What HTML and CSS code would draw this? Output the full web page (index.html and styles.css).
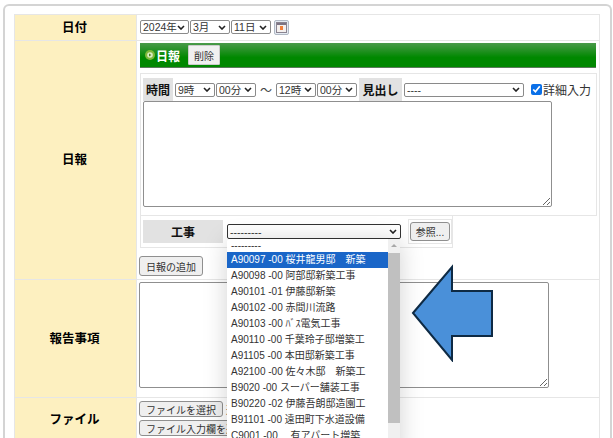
FILE: index.html
```html
<!DOCTYPE html>
<html lang="ja">
<head>
  <meta charset="UTF-8" />
  <meta name="viewport" content="width=device-width, initial-scale=1.0" />
  <title>日報入力</title>
  <link rel="stylesheet" href="styles.css">
</head>
<body>
  <div class="page">
    <div class="card">
      <table class="form">
        <tr class="row-date">
          <th>日付</th>
          <td>
            <div class="date-line">
              <select class="sel w-year"><option>2024年</option></select>
              <select class="sel w-mon"><option>3月</option></select>
              <select class="sel w-day"><option>11日</option></select>
              <button class="cal" type="button">
                <svg width="11" height="11" viewBox="0 0 11 11">
                  <rect x="0.5" y="0.5" width="10" height="10" fill="#f4f0ee" stroke="#8a8490"/>
                  <rect x="1" y="1" width="9" height="2" fill="#7c7484"/>
                  <rect x="4" y="4" width="3" height="4" fill="#f0803a"/>
                </svg>
              </button>
            </div>
          </td>
        </tr>
        <tr class="row-report">
          <th>日報</th>
          <td>
            <div class="green-bar">
              <svg class="bullet" width="10" height="10" viewBox="0 0 10 10">
                <circle cx="5" cy="5" r="5" fill="#7fb83a"/>
                <circle cx="5" cy="5" r="2.8" fill="#dcecc4"/>
                <path d="M4 3.4 6.4 5 4 6.6z" fill="#4a8a1a"/>
              </svg>
              <span class="green-title">日報</span>
              <button class="btn btn-del" type="button">削除</button>
            </div>
            <div class="entry">
              <div class="time-line">
                <span class="cap cap-time">時間</span>
                <select class="sel w-hour"><option>9時</option></select>
                <select class="sel w-min"><option>00分</option></select>
                <span class="tilde">～</span>
                <select class="sel w-hour"><option>12時</option></select>
                <select class="sel w-min"><option>00分</option></select>
                <span class="cap cap-head">見出し</span>
                <select class="sel w-head"><option>----</option></select>
                <label class="detail"><input type="checkbox" checked />詳細入力</label>
              </div>
              <textarea class="note"></textarea>
            </div>
            <div class="koji">
              <span class="cap cap-koji">工事</span>
              <div class="koji-pick">
                <select class="sel sel-focus"><option>---------</option></select>
                <div class="drop">
                  <ul class="drop-list">
                    <li class="first">---------</li>
                    <li class="on">A90097 -00 桜井龍男邸　新築</li>
                    <li>A90098 -00 阿部邸新築工事</li>
                    <li>A90101 -01 伊藤邸新築</li>
                    <li>A90102 -00 赤間川流路</li>
                    <li>A90103 -00 ﾊﾞｽ電気工事</li>
                    <li>A90110 -00 千葉玲子邸増築工</li>
                    <li>A91105 -00 本田邸新築工事</li>
                    <li>A92100 -00 佐々木邸　新築工</li>
                    <li>B9020 -00 スーパー舗装工事</li>
                    <li>B90220 -02 伊藤吾朗邸造園工</li>
                    <li>B91101 -00 遠田町下水道設備</li>
                    <li>C9001 -00 　有アパート増築</li>
                  </ul>
                  <div class="drop-bar">
                    <span class="drop-up"></span>
                    <span class="drop-thumb"></span>
                  </div>
                </div>
              </div>
              <span class="ref-box"><button class="btn btn-ref" type="button">参照...</button></span>
            </div>
            <button class="btn btn-add" type="button">日報の追加</button>
          </td>
        </tr>
        <tr class="row-notes">
          <th>報告事項</th>
          <td><textarea class="note note-wide"></textarea></td>
        </tr>
        <tr class="row-file">
          <th>ファイル</th>
          <td>
            <div class="file-line">
              <button class="btn btn-file" type="button">ファイルを選択</button>
              <span class="file-none">選択されていません</span>
            </div>
            <button class="btn btn-file" type="button">ファイル入力欄を追加</button>
          </td>
        </tr>
      </table>
    </div>
    <svg class="arrow" width="84" height="98" viewBox="0 0 84 98">
      <path d="M2 49 41 3V27H81V72H41V96z" fill="#4a90d9" stroke="#0e2a44" stroke-width="2"/>
    </svg>
  </div>
</body>
</html>
```

FILE: styles.css
```css
* {
  box-sizing: border-box;
}
html, body {
  margin: 0;
  height: 100%;
  background: #fff;
}
body {
  font-family: "Liberation Sans", "Noto Sans CJK JP", sans-serif;
  font-size: 12px;
  color: #000;
}
.page {
  position: relative;
  height: 100vh;
  overflow: hidden;
  padding: 4px 1px 0 3px;
}
.card {
  border: 2px solid #d4d4d4;
  border-bottom: none;
  border-radius: 6px 6px 0 0;
  padding: 8px 10px 0 9px;
  height: 600px;
}

/* main form */
.form {
  width: 586px;
  table-layout: fixed;
  border-collapse: collapse;
  border: 1px solid #e6e6e6;
}
.form th {
  width: 122px;
  background: #fdf0c0;
  border: 1px solid #e6e6e6;
  font-size: 12.5px;
  font-weight: bold;
  text-align: center;
  padding: 0 2px 3px 0;
}
.form td {
  border: 1px solid #e6e6e6;
  padding: 0 3px 0 2px;
  vertical-align: top;
}
.row-date { height: 26px; }
.row-report { height: 239px; }
.row-notes { height: 118px; }
.row-file { height: 45px; }

/* controls */
.sel {
  appearance: none;
  height: 14px;
  padding: 0 0 0 2px;
  font-family: inherit;
  font-size: 10.5px;
  line-height: 12px;
  color: #333;
  background: #fff url("data:image/svg+xml,%3Csvg xmlns='http://www.w3.org/2000/svg' width='8' height='5'%3E%3Cpath d='M1 1l3 3 3-3' fill='none' stroke='%23222' stroke-width='1.6'/%3E%3C/svg%3E") no-repeat right 3px center;
  border: 1px solid #8a8a8a;
  border-radius: 2px;
}
.w-year { width: 49px; }
.w-mon, .w-day, .w-hour, .w-min { width: 40px; }
.w-head { width: 120px; }
.sel-focus {
  width: 174px;
  height: 15px;
  border: 1px solid #333;
}
.btn {
  font-family: inherit;
  font-size: 10px;
  color: #333;
  background: #efefef;
  border: 1px solid #8f8f8f;
  border-radius: 3px;
  padding: 0;
}
.date-line {
  display: flex;
  align-items: center;
  gap: 1px;
  height: 24px;
  padding-left: 1px;
}
.cal {
  width: 15px;
  height: 15px;
  margin-left: 2px;
  padding: 0;
  display: flex;
  align-items: center;
  justify-content: center;
  background: #e4eaf2;
  border: 1px solid #b0b8c4;
  border-radius: 2px;
}

/* green title bar */
.green-bar {
  display: flex;
  align-items: center;
  width: 456px;
  height: 25px;
  margin: 2px 0 0 1px;
  padding-left: 5px;
  background: linear-gradient(#4a9a4a, #008800 60%);
  border-bottom: 1px solid #5a7a5a;
}
.green-title {
  margin-left: 1px;
  color: #fff;
  font-size: 12px;
  font-weight: bold;
}
.btn-del {
  width: 32px;
  height: 20px;
  margin-left: 8px;
  background: #f0f0f0;
  border-color: #ccc;
  border-radius: 1px;
}

/* entry block */
.entry {
  width: 457px;
  height: 143px;
  margin: 5px 0 0 1px;
  padding: 4px 0 0 2px;
  border: 1px solid #e6e6e6;
}
.time-line {
  display: flex;
  align-items: center;
  height: 23px;
  gap: 1px;
}
.cap {
  display: flex;
  align-items: center;
  justify-content: center;
  background: #e2e2e2;
  color: #111;
  font-size: 12px;
  font-weight: bold;
}
.cap-time {
  width: 30px;
  height: 23px;
  margin-right: 1px;
}
.cap-head {
  width: 43px;
  height: 23px;
  margin: 0 1px;
}
.tilde {
  width: 18px;
  text-align: center;
  color: #444;
}
.detail {
  display: flex;
  align-items: center;
  margin-left: 6px;
  color: #333;
  white-space: nowrap;
}
.detail input {
  width: 11px;
  height: 11px;
  margin: 0 1px 0 0;
  accent-color: #0a70e8;
}
.note {
  display: block;
  width: 409px;
  height: 106px;
  padding: 2px;
  border: 1px solid #8f8f8f;
  border-radius: 2px;
  background: #fff;
}
.note-wide {
  width: 410px;
  margin-top: 2px;
}

/* koji picker */
.koji {
  display: flex;
  align-items: center;
  width: 313px;
  height: 32px;
  margin-left: 1px;
  padding-left: 2px;
  border: 1px solid #e6e6e6;
  border-top: none;
}
.cap-koji {
  width: 81px;
  height: 23px;
  margin-right: 4px;
}
.koji-pick {
  position: relative;
  display: flex;
  align-items: center;
}
.drop {
  position: absolute;
  left: 0;
  top: 15px;
  z-index: 2;
  display: flex;
  width: 173px;
  height: 220px;
  background: #fff;
  border-radius: 3px 3px 0 0;
  box-shadow: 0 2px 24px rgba(0, 0, 0, 0.18);
}
.drop-list {
  flex: 1;
  margin: 0;
  padding: 1px 0 0;
  list-style: none;
  overflow: hidden;
  font-size: 10px;
  color: #333;
}
.drop-list li {
  height: 16px;
  line-height: 16px;
  padding-left: 4px;
  white-space: nowrap;
}
.drop-list .first {
  height: 12px;
  line-height: 12px;
}
.drop-list .on {
  background: #1a66c8;
  color: #fff;
}
.drop-bar {
  width: 12px;
  background: #f0f0f0;
}
.drop-up {
  display: block;
  width: 0;
  height: 0;
  margin: 5px auto 6px;
  border: 3px solid transparent;
  border-top: none;
  border-bottom: 3px solid #a8a8a8;
}
.drop-thumb {
  display: block;
  height: 170px;
  background: #c0c0c0;
}
.ref-box {
  display: flex;
  align-items: center;
  height: 25px;
  margin-left: 7px;
  padding: 0 1px;
  border: 1px solid #e6e6e6;
}
.btn-ref {
  width: 40px;
  height: 19px;
}
.btn-add {
  display: block;
  width: 64px;
  height: 20px;
  margin-top: 8px;
}

/* file row */
.file-line {
  display: flex;
  align-items: center;
  height: 16px;
  margin: 3px 0;
  gap: 3px;
}
.btn-file {
  height: 16px;
  padding: 0 6px;
  white-space: nowrap;
}
.file-none {
  font-size: 10.5px;
  color: #333;
}

/* callout arrow over the form */
.arrow {
  position: absolute;
  left: 411px;
  top: 264px;
  z-index: 3;
}
```
